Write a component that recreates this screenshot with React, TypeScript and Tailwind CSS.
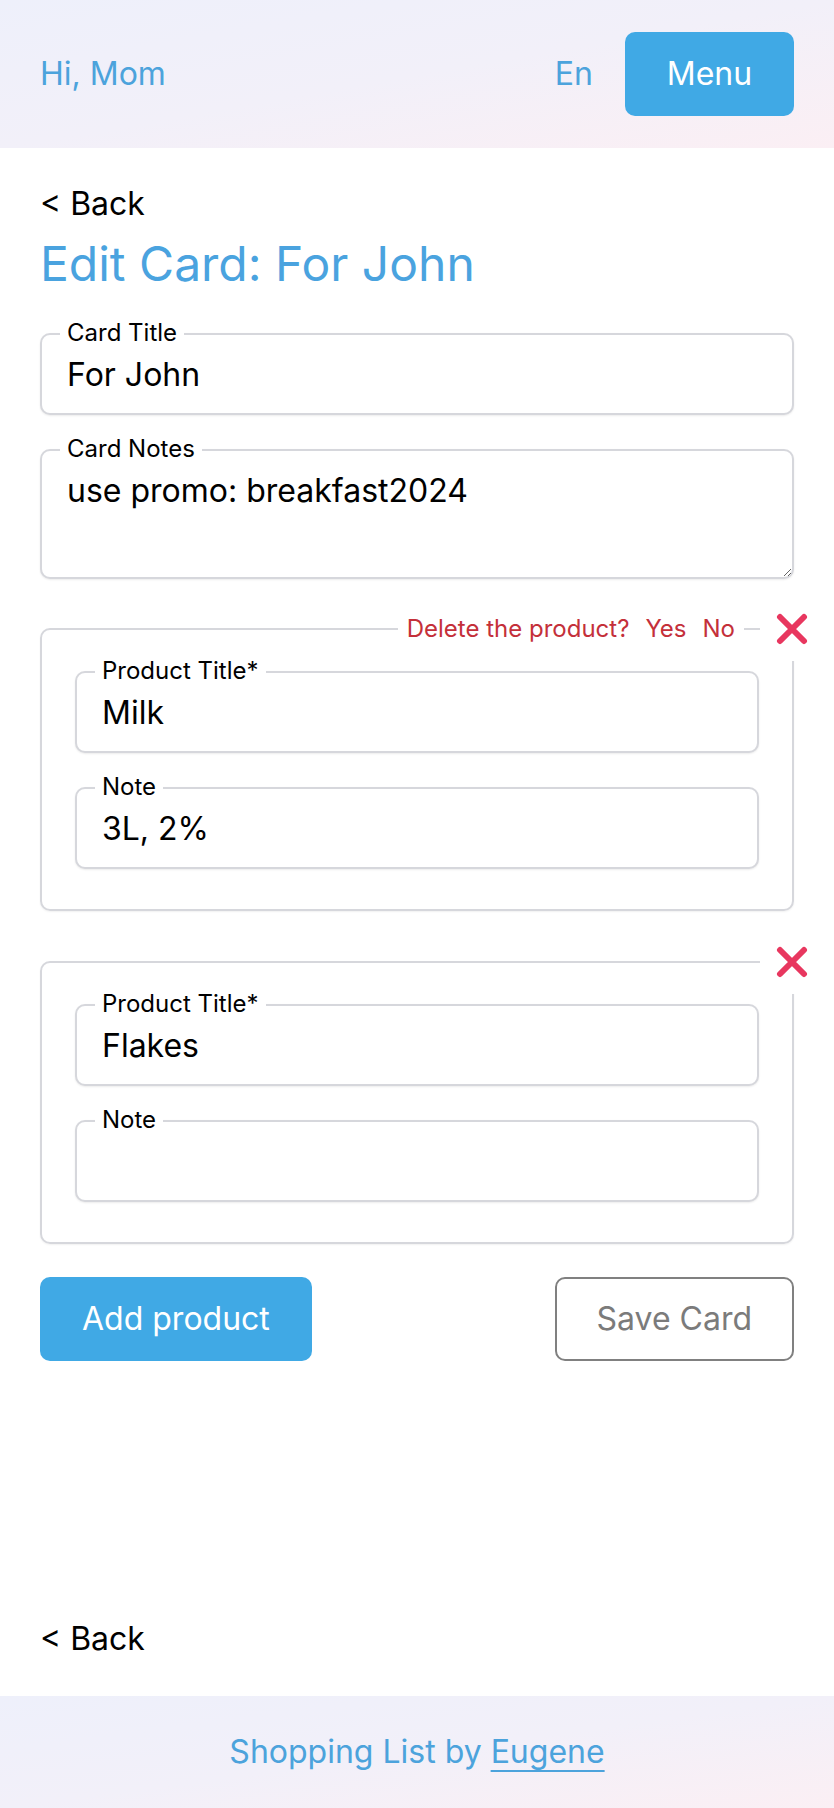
import React from "react";

const font = { fontFamily: "Inter, 'Noto Sans', sans-serif" };

function XIcon() {
  return (
    <svg width="32" height="32" viewBox="0 0 32 32" fill="none">
      <path d="M4 4 L28 28 M28 4 L4 28" stroke="#e8375f" strokeWidth="6" strokeLinecap="round" />
    </svg>
  );
}

function Field({ label, value }: { label: string; value: string }) {
  return (
    <div className="relative">
      <span className="absolute left-[20px] -top-[14px] bg-white px-[7px] text-[24px] leading-[27px] text-black">
        {label}
      </span>
      <input
        readOnly
        value={value}
        className="block w-full h-[82px] rounded-[10px] border-2 border-[#d6d7dc] bg-white pl-[25px] pr-4 text-[32px] leading-[36px] text-black outline-none shadow-[0_1px_2px_rgba(0,0,0,0.08)]"
      />
    </div>
  );
}

function Product({ title, note, confirm }: { title: string; note: string; confirm?: boolean }) {
  return (
    <div className="relative rounded-[10px] border-2 border-[#d6d7dc] px-[33px] pt-[41px] pb-[40px] shadow-[0_1px_2px_rgba(0,0,0,0.06)]">
      {confirm && (
        <div className="absolute right-[48px] -top-[15px] flex items-center bg-white px-[9px] text-[24px] leading-[27px] text-[#c4303a]">
          <span>Delete the product?</span>
          <span className="ml-[16px]">Yes</span>
          <span className="ml-[16px]">No</span>
        </div>
      )}
      <div className="absolute -right-[32px] -top-[33px] flex h-[64px] w-[64px] items-center justify-center bg-white">
        <XIcon />
      </div>
      <div className="flex flex-col gap-[34px]">
        <Field label="Product Title*" value={title} />
        <Field label="Note" value={note} />
      </div>
    </div>
  );
}

export default function App() {
  return (
    <div className="flex min-h-screen flex-col bg-white" style={font}>
      <header className="flex h-[148px] items-center justify-between bg-gradient-to-br from-[#eef0fb] via-[#f2f0f9] to-[#fbeff4] px-10">
        <span className="text-[32px] leading-[36px] text-[#4ca3dc]">Hi, Mom</span>
        <div className="flex items-center gap-[32px]">
          <span className="text-[32px] leading-[36px] text-[#4ca3dc]">En</span>
          <button className="h-[84px] w-[169px] rounded-[10px] bg-[#40a9e5] text-[32px] text-white">Menu</button>
        </div>
      </header>

      <main className="flex flex-1 flex-col px-10 pt-[38px] pb-[39px]">
        <a className="text-[32px] leading-[36px] text-black">&lt; Back</a>
        <h1 className="mt-[13px] text-[48px] leading-[58px] text-[#4aa3df]">Edit Card: For John</h1>

        <div className="mt-[40px]">
          <Field label="Card Title" value="For John" />
        </div>

        <div className="relative mt-[34px]">
          <span className="absolute left-[20px] -top-[14px] z-10 bg-white px-[7px] text-[24px] leading-[27px] text-black">
            Card Notes
          </span>
          <textarea
            readOnly
            value="use promo: breakfast2024"
            className="block h-[130px] w-full rounded-[10px] border-2 border-[#d6d7dc] bg-white pl-[25px] pr-4 pt-[22px] text-[32px] leading-[36px] text-black outline-none shadow-[0_1px_2px_rgba(0,0,0,0.08)]"
          />
        </div>

        <div className="mt-[49px]">
          <Product title="Milk" note="3L, 2%" confirm />
        </div>
        <div className="mt-[50px]">
          <Product title="Flakes" note="" />
        </div>

        <div className="mt-[33px] flex items-center justify-between">
          <button className="h-[84px] rounded-[10px] bg-[#40a9e5] px-[42px] text-[32px] text-white">Add product</button>
          <button className="h-[84px] rounded-[10px] border-2 border-[#808080] bg-white px-[40px] text-[32px] text-[#7b7b7b]">
            Save Card
          </button>
        </div>

        <a className="mt-auto text-[32px] leading-[36px] text-black">&lt; Back</a>
      </main>

      <footer className="flex h-[112px] items-center justify-center bg-gradient-to-br from-[#eef0fb] via-[#f2f0f9] to-[#fbeff4]">
        <span className="text-[32px] leading-[36px] text-[#4ca3dc]">
          Shopping List by{" "}
          <a className="underline decoration-2 underline-offset-[7px]">Eugene</a>
        </span>
      </footer>
    </div>
  );
}
